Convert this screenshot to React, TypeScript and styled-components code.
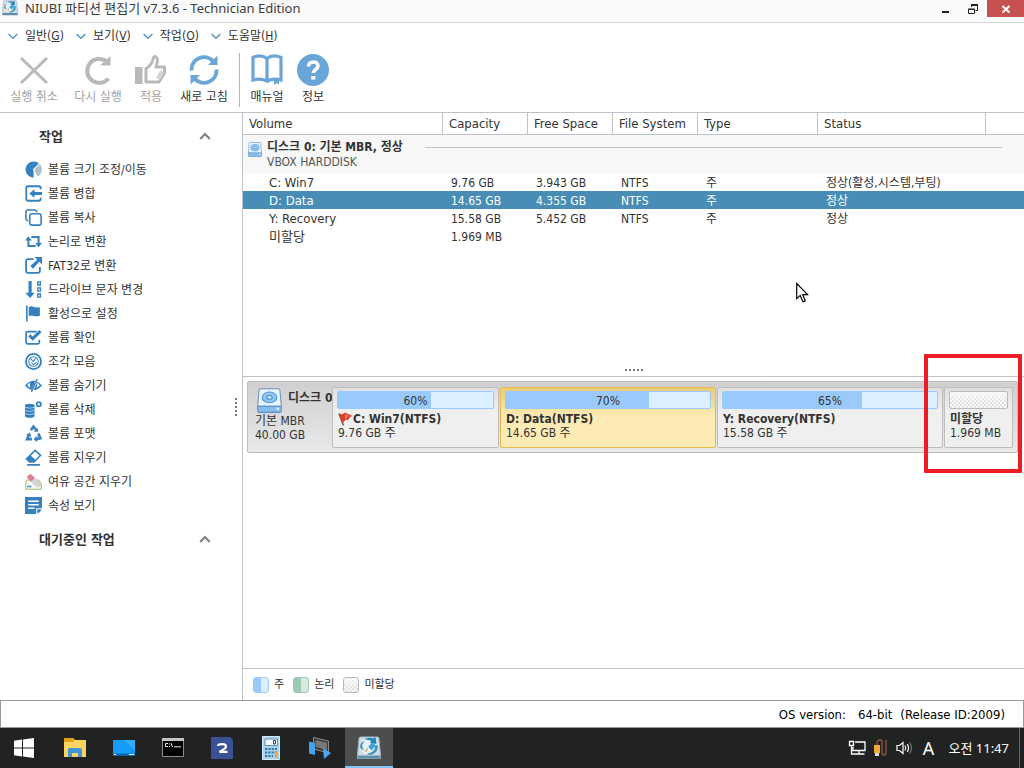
import React from "react";
import styled, { createGlobalStyle, css } from "styled-components";

const GlobalStyle = createGlobalStyle`
  * { box-sizing: border-box; }
  body {
    margin: 0;
    background: #fff;
    color: #333;
    font: 12px/18px "DejaVu Sans Condensed", "Noto Sans", "Noto Sans CJK KR", sans-serif;
  }
  button { font: inherit; color: inherit; background: none; border: 0; padding: 0; }
  ul { list-style: none; margin: 0; padding: 0; }
  svg { display: block; flex: none; }
`;

const line = "#bfc3c9";
const blue = "#3580bf";
const sky = "#99cafb";

const Window = styled.div`
  min-height: 100vh;
  display: flex;
  flex-direction: column;
`;

/* ---------- title bar ---------- */

const TitleBar = styled.header`
  display: flex;
  align-items: flex-start;
  height: 23px;
  padding-left: 2px;
  background: #fafafa;
  border-bottom: 1px solid #d4d4d4;
`;

const Title = styled.h1`
  flex: 1;
  margin: 0 0 0 7px;
  font: 13px/16px "Noto Sans", "Noto Sans CJK KR", sans-serif;
  color: #3c3c3c;
`;

const WindowButton = styled.button<{ $close?: boolean }>`
  display: flex;
  align-items: center;
  justify-content: center;
  width: ${(p) => (p.$close ? "37px" : "28px")};
  height: 17px;
  background: ${(p) => (p.$close ? "#c75050" : "none")};
`;

/* ---------- menu and toolbar ---------- */

const MenuBar = styled.nav`
  display: flex;
  gap: 12px;
  height: 25px;
  padding-left: 8px;
`;

const MenuButton = styled.button`
  display: flex;
  align-items: center;
  gap: 7px;
`;

const Toolbar = styled.div`
  display: flex;
  height: 65px;
  padding: 5px 2px;
  border-bottom: 1px solid ${line};
`;

const ToolButton = styled.button<{ $width: number }>`
  display: flex;
  flex-direction: column;
  align-items: center;
  gap: 3px;
  width: ${(p) => p.$width}px;
  padding-top: 1px;
  white-space: nowrap;
  line-height: 16px;
  color: #333;
  &:disabled { color: #a2a2a2; }
`;

const ToolDivider = styled.span`
  width: 1px;
  height: 54px;
  margin: 0 4px 0 3px;
  background: #b5b5b5;
`;

/* ---------- body ---------- */

const Body = styled.div`
  flex: 1;
  display: flex;
`;

const Sidebar = styled.aside`
  display: flex;
  width: 243px;
  border-right: 1px solid ${line};
`;

const SidebarContent = styled.div`
  flex: 1;
  padding: 11px 0 0 25px;
`;

const SectionHeader = styled.button`
  display: flex;
  align-items: center;
  justify-content: space-between;
  width: 100%;
  height: 24px;
  padding: 0 18px 0 14px;
  font-size: 13px;
  font-weight: bold;
`;

const TaskList = styled.ul`
  padding: 9px 0 10px;
`;

const TaskButton = styled.button`
  display: flex;
  align-items: center;
  gap: 6px;
  height: 24px;
  white-space: nowrap;
`;

const ButtonText = styled.span`
  padding-top: 2px;
`;

const Grip = styled.div<{ $vertical?: boolean }>`
  display: flex;
  align-items: center;
  justify-content: center;
  gap: 2px;
  ${(p) =>
    p.$vertical
      ? css`flex-direction: column; width: 13px;`
      : css`height: 14px; border-bottom: 1px solid ${line};`}
`;

const Dot = styled.i`
  width: 2px;
  height: 2px;
  background: #777;
`;

const Content = styled.main`
  flex: 1;
  min-width: 0;
  display: flex;
  flex-direction: column;
`;

const VolumePane = styled.section`
  position: relative;
  flex: 264 1 0;
  display: flex;
  flex-direction: column;
  justify-content: space-between;
`;

const VolumeTable = styled.table`
  width: 100%;
  table-layout: fixed;
  border-collapse: separate;
  border-spacing: 0;
  text-align: left;
`;

const HeadCell = styled.th`
  height: 22px;
  padding: 1px 6px 0;
  border-right: 1px solid ${line};
  border-bottom: 1px solid ${line};
  font-size: 13px;
  font-weight: normal;
  &:last-child { border-right: 0; }
`;

const GroupCell = styled.td`
  height: 38px;
  padding: 5px 22px 0 5px;
  background: #f7f7f7;
  vertical-align: top;
`;

const GroupLayout = styled.div`
  display: grid;
  grid-template-columns: 14px auto 1fr;
  column-gap: 5px;
  align-items: start;
  line-height: 15px;
`;

const GroupIcon = styled.span`
  padding-top: 2px;
`;

const GroupName = styled.strong`
  display: block;
`;

const GroupModel = styled.span`
  display: block;
  color: #555;
`;

const GroupRule = styled.span`
  height: 1px;
  margin: 7px 0 0 17px;
  background: #c4c4c4;
`;

const VolumeRow = styled.tr<{ $selected?: boolean }>`
  height: 18px;
  ${(p) => p.$selected && css`background: #478db5; color: #fff;`}
`;

const Cell = styled.td`
  padding: 2px 8px 0;
  line-height: 16px;
  white-space: nowrap;
  &:first-child {
    padding-left: 26px;
    font-size: 13px;
  }
`;

const Pointer = styled.svg`
  position: absolute;
  left: 553px;
  top: 169px;
`;

/* ---------- disk map ---------- */

const MapPane = styled.section`
  display: flow-root;
  flex: 291 1 0;
`;

const Disk = styled.div`
  display: grid;
  grid-template-columns: 83px 167fr 216fr 226fr 69px;
  column-gap: 1px;
  height: 72px;
  margin: 4px 6px 4px 4px;
  padding: 5px 4px 4px 0;
  border: 1px solid #bcbcbc;
  border-radius: 2px;
  background: linear-gradient(#cfcfcf, #e9e9e9);
`;

const DiskInfo = styled.div`
  padding: 1px 0 0 7px;
  line-height: 14px;
  white-space: nowrap;
`;

const DiskHead = styled.div`
  display: flex;
  gap: 6px;
  margin: 0 0 1px 2px;
  line-height: 20px;
  font-weight: bold;
`;

const Partition = styled.div<{ $selected?: boolean }>`
  position: relative;
  min-width: 0;
  padding: 3px 4px;
  border: 1px solid #bebebe;
  border-radius: 2px;
  background: linear-gradient(#dedede, #efefef 40%);
  line-height: 14px;
  white-space: nowrap;
  ${(p) =>
    p.$selected &&
    css`
      border-color: #e9b852;
      background: linear-gradient(#e8cd76, #fdebb5 50%);
    `}
`;

const UsageBar = styled.div`
  position: relative;
  height: 18px;
  margin-bottom: 2px;
  border: 1px solid ${sky};
  border-radius: 2px;
  background: #dceffe;
  text-align: center;
  line-height: 18px;
`;

const UsageFill = styled.div`
  position: absolute;
  inset: 0 auto 0 0;
  background: ${sky};
`;

const UsageText = styled.span`
  position: relative;
`;

const checker = css`
  background:
    linear-gradient(#f8f8f8, #f8f8f800 60%) 0 0 / 100% 100%,
    repeating-conic-gradient(#e2e2e2 0 25%, #fbfbfb 0 50%) 0 0 / 4px 4px;
`;

const FreeBar = styled.div`
  height: 18px;
  margin-bottom: 2px;
  border: 1px solid #bbb;
  border-radius: 2px;
  ${checker}
`;

const PartitionName = styled.strong`
  display: flex;
  align-items: center;
  height: 15px;
  padding-left: 1px;
`;

const PartitionSize = styled.span`
  display: block;
  padding-left: 1px;
`;

const Highlight = styled.div`
  position: absolute;
  inset: -34px -10px -26px -21px;
  border: 4px solid #ed1c24;
  border-radius: 1px;
`;

const Legend = styled.footer`
  display: flex;
  align-items: center;
  gap: 9px;
  height: 32px;
  padding-left: 10px;
  border-top: 1px solid ${line};
`;

const LegendItem = styled.span`
  display: flex;
  align-items: center;
  gap: 5px;
  font-size: 11px;
`;

const Swatch = styled.i<{ $kind: "primary" | "logical" | "free" }>`
  width: 16px;
  height: 16px;
  border: 1px solid;
  border-radius: 3px;
  ${(p) =>
    p.$kind === "primary"
      ? css`border-color: ${sky}; background: linear-gradient(90deg, ${sky} 50%, #dceffe 50%);`
      : p.$kind === "logical"
        ? css`border-color: #9ec8b2; background: linear-gradient(90deg, #9ec8b2 50%, #d9e9e0 50%);`
        : css`${checker} border-color: #b8b8b8;`}
`;

/* ---------- status bar and taskbar ---------- */

const StatusBar = styled.div`
  display: flex;
  align-items: center;
  justify-content: flex-end;
  height: 28px;
  padding: 2px 18px 0 0;
  border: 1px solid #999;
  font-size: 13px;
  color: #000;
`;

const StatusLabel = styled.span`
  margin-right: 12px;
`;

const StatusNote = styled.span`
  margin-left: 8px;
`;

const Taskbar = styled.footer`
  display: flex;
  height: 40px;
  background: #212322;
  color: #fff;
`;

const TaskbarApps = styled.div`
  display: flex;
  flex: 1;
  gap: 1px;
`;

const AppButton = styled.button<{ $active?: boolean; $start?: boolean }>`
  display: flex;
  align-items: center;
  justify-content: center;
  width: 48px;
  border-bottom: 2px solid transparent;
  padding-top: 2px;
  ${(p) => p.$start && css`margin-right: 2px;`}
  ${(p) => p.$active && css`background: #4b4e4d; border-bottom-color: #86c2f2;`}
`;

const Tray = styled.div`
  display: flex;
  align-items: center;
  gap: 6px;
  padding-right: 10px;
  border-right: 1px solid #666;
  margin-right: 4px;
`;

const InputMode = styled.button`
  width: 18px;
  font: 18px/20px "Noto Sans", sans-serif;
`;

const Clock = styled.time`
  margin-left: 5px;
  font: 13px/18px "Noto Sans", "Noto Sans CJK KR", sans-serif;
`;

/* ---------- drawings ---------- */

const Chevron = ({ up }: { up?: boolean }) => (
  <svg width={up ? 12 : 10} height={up ? 12 : 10} viewBox="0 0 10 10" fill="none" stroke={up ? "#808080" : "#5b93c4"} strokeWidth={up ? 1.8 : 1.5}>
    <path d={up ? "M1 7.5 5 3.3 9 7.5" : "M.6 3 5 7.2 9.4 3"} />
  </svg>
);

const DiskIcon = ({ width, height }: { width: number; height: number }) => (
  <svg width={width} height={height} viewBox="0 0 24 24" preserveAspectRatio="none">
    <path d="M3.5.8h17q1.3 0 1.5 1.3l1.4 15.4H.6L2 2.100Q2.200.8 3.500.8z" fill="#e8f4ff" stroke="#6c93b9" />
    <ellipse cx="12" cy="9" rx="7" ry="5.200" fill="#91c6f7" stroke="#4a92d6" />
    <ellipse cx="12" cy="9" rx="2.600" ry="1.800" fill="#d7ecff" stroke="#3f88cf" />
    <path d="M.7 17.500h22.600v4.500q0 1.400-1.400 1.400H2.100q-1.400 0-1.400-1.400z" fill="#86bdf0" stroke="#5e8fbd" />
    <circle cx="20" cy="20" r="1.200" fill="#fff" />
  </svg>
);

const AppLogo = ({ size }: { size: number }) => (
  <svg width={size} height={size} viewBox="0 0 24 24">
    <path d="M3.500 1h17q1.200 0 1.400 1.200L23.500 19v3.500H.5V19L2.100 2.200Q2.300 1 3.500 1z" fill="#cfdce3" stroke="#9fb4bf" />
    <path d="M.8 19.500h22.400v3H.8z" fill="#5f8fa8" />
    <circle cx="12" cy="10.500" r="9" fill="#e6eef2" />
    <path d="M7 3.500Q12 .5 16 2.500L18.500 1l1 7-6.500-1 1.500-2Q11 3 7 3.500z" fill="#1f86b8" />
    <path d="M3 11q0-4 4-6 0 2-2 4 0 3 2 5-3 0-4-3zM20.500 9q1.500 7-5.500 9.500-3 1-5.500-.5Q18 17 18.500 9z" fill="#3f93b8" />
    <path d="m11 11 4-4.500 4 3-4.500 5z" fill="#3fa4dc" />
    <path d="m11 11 3.500 3.500-4 .5z" fill="#f4f8fa" />
    <path d="m7.500 16 3.500-5-1 4z" fill="#c79b4a" />
  </svg>
);

const gray = "#b9b9b9";
const toolBlue = "#6aa5d8";

const toolIcons: Record<string, React.ReactNode> = {
  cancel: <path d="M3 4 29 29M29 4 3 29" stroke={gray} strokeWidth="3" />,
  redo: (
    <>
      <path d="M26.500 24.500A12 12 0 1 1 24 7" stroke={gray} strokeWidth="4" />
      <path d="M28.500 2v9.500H18z" fill={gray} />
    </>
  ),
  apply: (
    <>
      <path d="M0 13h7.500v17H0z" fill={gray} />
      <path d="M11 14.500c4-2 6.500-6 7.500-11 1.500-2 4-.5 4 3 0 2-1 4.500-1.500 6.500h8.500v6L24 28H11z" stroke={gray} strokeWidth="3" strokeLinejoin="round" />
      <path d="m23 25 4-8" stroke="#d5d5d5" strokeWidth="4" />
    </>
  ),
  refresh: (
    <>
      <path d="M3.500 16.500A12.500 12.500 0 0 1 25 7M28.500 15.500A12.500 12.500 0 0 1 7 25" stroke={toolBlue} strokeWidth="4" />
      <path d="M29.500 1.500V11H20zM2.500 30.500V21H12z" fill={toolBlue} />
    </>
  ),
  manual: (
    <>
      <path d="M16 4.500C12 1.500 7 1.300 2 3.500V26c5-1.500 10-1 14 1V4.500C20 1.500 25 1.300 30 3.500V26c-5-1.500-10-1-14 1" stroke={toolBlue} strokeWidth="3.200" />
      <path d="M23 24h5v7l-2.500-2-2.500 2z" fill={toolBlue} />
    </>
  ),
  info: (
    <>
      <circle cx="16" cy="16" r="16" fill={toolBlue} />
      <path d="M11.500 12.500c0-6 9.500-6 9.500-.5 0 3.500-4.700 3.500-4.700 7" stroke="#fff" strokeWidth="3.600" />
      <path d="M14.300 22h4v3.600h-4z" fill="#fff" />
    </>
  ),
};

const taskIcons: Record<string, React.ReactNode> = {
  resize: (
    <>
      <path d="M8 8 8.500.5a7.500 7.500 0 1 0-1 15z" fill={blue} />
      <path d="m8 8 5.500-5.500A7.500 7.500 0 0 1 11 15z" fill="#aebfd0" />
      <path d="M8.500.5a7.500 7.500 0 0 1 5 2L8 8v7.500L6 15z" fill={blue} />
      <path d="M13.500 2.500 8 8l3.500 7" stroke="#fff" />
    </>
  ),
  merge: (
    <>
      <path d="M14.800 4V3Q14.800 1.200 13 1.200H3Q1.200 1.200 1.200 3v10q0 1.800 1.800 1.800h10q1.800 0 1.800-1.800v-1" stroke={blue} strokeWidth="1.700" />
      <path d="m4 8 5-4v2.500h7v3H9V12z" fill={blue} />
    </>
  ),
  copy: (
    <>
      <rect x="4.500" y="4.500" width="10.700" height="10.700" rx="2" stroke={blue} strokeWidth="1.500" />
      <path d="M2.800 11.500.9 9.600V3Q.9.900 3 .9h6.500l2 1.800" stroke={blue} strokeWidth="1.500" />
    </>
  ),
  logical: (
    <>
      <path d="M10 12.200H3.200V6M6 3.800h6.800V10" stroke={blue} strokeWidth="1.900" />
      <path d="m0 7 3.200-4 3.200 4zm9.600 2.500h6.400l-3.200 4z" fill={blue} />
    </>
  ),
  fat: (
    <>
      <path d="M8 2H3Q1 2 1 4v9q0 2 2 2h9q2 0 2-2V9.500" stroke={blue} strokeWidth="1.700" />
      <path d="M9 0h7v7l-2.500-2.500-6 6.500L5 8.500l6.500-6z" fill={blue} />
    </>
  ),
  letter: (
    <>
      <path d="M3.300 0h3v11h3L4.800 16 .3 11h3z" fill={blue} />
      <path d="M12 .8h2.500v3H12zM12 6.500h2.500v3H12zM12 12.200h2.500v3H12z" stroke={blue} strokeWidth="1.300" />
    </>
  ),
  active: <path d="M1 .5h1.500v15H1zM3.500 2c4-2.500 5 1.500 10.500 0v8c-5 2-6.500-1.500-10.500.5z" fill={blue} />,
  check: (
    <>
      <path d="M11 2.500H2.500Q1 2.500 1 4v8.500Q1 14 2.500 14H12q1.500 0 1.500-1.500V10" stroke={blue} strokeWidth="1.600" />
      <path d="m4 6 3.300 3L14.500 2" stroke={blue} strokeWidth="3" />
    </>
  ),
  defrag: (
    <>
      <circle cx="8" cy="8" r="7.100" stroke={blue} strokeWidth="1.700" />
      <circle cx="8" cy="8" r="4.500" stroke={blue} />
      <path d="m5 5 3 3 2-3M6 9l2 2 3-2" stroke={blue} />
    </>
  ),
  hide: (
    <>
      <path d="M0 8q8-9 16 0-8 9-16 0z" fill={blue} />
      <path d="M2 8q1.500-2 3-2.500-1 3 .5 4.500Q4 10 2 8zm12 0q-1.500-2-3-2.500 1 3-.5 4.500Q12 10 14 8z" fill="#fff" />
      <path d="m6.500 14 5-12" stroke="#fff" strokeWidth="2" />
      <path d="m6 14 5.500-12" stroke={blue} strokeWidth="1.300" />
    </>
  ),
  remove: (
    <>
      <path d="M0 4q0-1.500 4.500-1.500T9 4v10q0 1.700-4.500 1.700T0 14z" fill={blue} />
      <path d="M0 6q4.500 1.500 9 0M0 9q4.500 1.500 9 0M0 12q4.500 1.500 9 0" stroke="#b9d6ee" strokeWidth=".8" />
      <circle cx="13" cy="3" r="2" stroke={blue} strokeWidth="1.700" />
    </>
  ),
  format: (
    <>
      <path d="M5.500 5 8 1.500 10.500 5M12.500 8l2 4.500-4 .8M6.500 13.300H2L3.800 9" stroke={blue} strokeWidth="2.500" />
      <path d="m8.500 6.500 4-.5-.5-3.500zM11.500 10v6L8 13.300zM1 9.500l3.500-2.500 1.500 4z" fill={blue} />
    </>
  ),
  erase: (
    <>
      <path d="M9.500 1.300 14.700 6 8.500 12.200H4.200L1.300 9.500z" stroke={blue} strokeWidth="1.400" />
      <path d="m5 5.700 5.500 5.100-2 1.400H4.200L1.300 9.500zM2 14h12v1.700H2z" fill={blue} />
    </>
  ),
  wipe: (
    <>
      <path d="M1.500 6.500h11L15.300 10v5.300H.7V9z" fill="#f2f8ea" stroke="#9dc47d" />
      <path d="M2 12h4v1.500H2z" fill="#4a92d6" />
      <path d="M1.500 3.500 5 .7l4.500 4-4 3.800z" fill="#de7f96" />
      <path d="m9.500 4.700 5.500 6q0 2.500-3 3l-6.500-5.200z" fill="#d4d4d4" />
    </>
  ),
  props: (
    <>
      <path d="M0 0h16v11l-5 5H0z" fill={blue} />
      <path d="M3 4h10M3 7.300h10M3 10.600h6" stroke="#fff" strokeWidth="1.300" />
      <path d="M11 16v-5h5" stroke="#fff" />
      <path d="M12.500 15.500v-3h3z" fill={blue} />
    </>
  ),
};

const Icon = ({ size, children }: { size: number; children: React.ReactNode }) => (
  <svg width={size} height={size} viewBox={size > 20 ? "0 0 32 32" : "0 0 16 16"} fill="none" aria-hidden="true">
    {children}
  </svg>
);

const FlagIcon = () => (
  <svg width="15" height="14" viewBox="0 0 15 14">
    <path d="M1 1.500 5.500 13.500" stroke="#7c5a4d" strokeWidth="1.500" />
    <path d="M1 1.500q4 2 6-1l7.500 3.500-2.500 1-2 3-2-.5-4 4z" fill="#d93a2b" />
    <path d="m7 1.500 4 2-4 4z" fill="#f4765c" />
  </svg>
);

/* taskbar program icons, in display order */
const apps: { name: string; art: React.ReactNode }[] = [
  {
    name: "File Explorer",
    art: (
      <>
        <path d="M1 2h9l2 2h11v17H1z" fill="#fcd462" />
        <path d="M1 2h9l2 2-2 2H1z" fill="#e3a21a" />
        <path d="M5 21v-7q0-2 2-2h10q2 0 2 2v7h-4v-4H9v4z" fill="#3f95dc" />
      </>
    ),
  },
  {
    name: "Desktop",
    art: (
      <>
        <path d="M1 4h22v16H1z" fill="#149cfb" />
        <path d="M12 4h11v10z" fill="#36acff" />
        <path d="M1 17.500h22V20H1z" fill="#0b64a8" />
        <path d="M2 18.500h2M17 18.500h5" stroke="#fff" />
      </>
    ),
  },
  {
    name: "Command Prompt",
    art: (
      <>
        <path d="M1.500 2.500h21v18h-21z" fill="#000" stroke="#8c8c8c" />
        <path d="M1 2h22v3H1z" fill="#c4c4c4" />
        <path d="M7 7.500H4.500v3H7M8.500 7.500v1M8.500 10v1M10 7l1.500 4M13 10.800h7" stroke="#eee" fill="none" />
      </>
    ),
  },
  {
    name: "2",
    art: (
      <>
        <path d="M1 1h19l3 3v19H1z" fill="#3a5196" />
        <path d="M8 10Q8 8.200 12 8.200t4 2.300Q16 12.500 9.500 15.800H17.500" stroke="#fff" strokeWidth="2.200" fill="none" />
      </>
    ),
  },
  {
    name: "Calculator",
    art: (
      <>
        <path d="M3.500.5h17v23h-17z" fill="#a9d2ef" stroke="#d5eafa" />
        <path d="M6 3h12.500v6.500H6z" fill="#f4faff" stroke="#5c93be" />
        <path d="M14.500 4.500h2v3.500h-2z" fill="none" stroke="#345" />
        <path d="M6 13h12M6 16.500h12M6 20h8" stroke="#3c78a8" strokeWidth="2.200" strokeDasharray="2.200 1.100" />
        <path d="M16 15.500h2.500v6H16z" fill="#f0a030" />
      </>
    ),
  },
  {
    name: "Virtual Machine",
    art: (
      <>
        <path d="m5.500 1.500 15 3.500v12l-15-4z" fill="#3a3a3a" stroke="#8a8a8a" />
        <path d="m7.500 4 11.500 2.700v7L7.500 11z" fill="#777" />
        <path d="m1 5.500 6 1.500v12l-6-1.500z" fill="#3ea4ee" />
        <path d="m15 12 8 5-7 6z" fill="#4aa8ef" />
      </>
    ),
  },
];

/* ---------- data ---------- */

const menus = [
  ["일반", "G"],
  ["보기", "V"],
  ["작업", "O"],
  ["도움말", "H"],
];

const tools = [
  { icon: "cancel", label: "실행 취소", width: 64, disabled: true },
  { icon: "redo", label: "다시 실행", width: 64, disabled: true },
  { icon: "apply", label: "적용", width: 42, disabled: true },
  { icon: "refresh", label: "새로 고침", width: 64 },
];

const helpTools = [
  { icon: "manual", label: "매뉴얼", width: 46 },
  { icon: "info", label: "정보", width: 46 },
];

const tasks = [
  ["resize", "볼륨 크기 조정/이동"],
  ["merge", "볼륨 병합"],
  ["copy", "볼륨 복사"],
  ["logical", "논리로 변환"],
  ["fat", "FAT32로 변환"],
  ["letter", "드라이브 문자 변경"],
  ["active", "활성으로 설정"],
  ["check", "볼륨 확인"],
  ["defrag", "조각 모음"],
  ["hide", "볼륨 숨기기"],
  ["remove", "볼륨 삭제"],
  ["format", "볼륨 포맷"],
  ["erase", "볼륨 지우기"],
  ["wipe", "여유 공간 지우기"],
  ["props", "속성 보기"],
];

const columns = [
  ["Volume", 200],
  ["Capacity", 85],
  ["Free Space", 85],
  ["File System", 85],
  ["Type", 120],
  ["Status", 168],
] as const;

const volumes = [
  ["C: Win7", "9.76 GB", "3.943 GB", "NTFS", "주", "정상(활성,시스템,부팅)"],
  ["D: Data", "14.65 GB", "4.355 GB", "NTFS", "주", "정상"],
  ["Y: Recovery", "15.58 GB", "5.452 GB", "NTFS", "주", "정상"],
  ["미할당", "1.969 MB", "", "", "", ""],
];

const partitions = [
  { name: "C: Win7(NTFS)", size: "9.76 GB 주", used: 60, flag: true },
  { name: "D: Data(NTFS)", size: "14.65 GB 주", used: 70, selected: true },
  { name: "Y: Recovery(NTFS)", size: "15.58 GB 주", used: 65 },
];

const Dots = ({ vertical }: { vertical?: boolean }) => (
  <Grip $vertical={vertical}>
    {[0, 1, 2, 3, 4].map((n) => (
      <Dot key={n} />
    ))}
  </Grip>
);

const ToolItem = ({ icon, label, width, disabled }: { icon: string; label: string; width: number; disabled?: boolean }) => (
  <ToolButton $width={width} disabled={disabled}>
    <Icon size={32}>{toolIcons[icon]}</Icon>
    {label}
  </ToolButton>
);

export default function App() {
  return (
    <Window>
      <GlobalStyle />
      <TitleBar>
        <AppLogo size={16} />
        <Title>NIUBI 파티션 편집기 v7.3.6 - Technician Edition</Title>
        <WindowButton aria-label="Minimize">
          <svg width="12" height="12"><path d="M3 8h7v2H3z" fill="#222" /></svg>
        </WindowButton>
        <WindowButton aria-label="Restore">
          <svg width="12" height="12" fill="none" stroke="#222">
            <path d="M4.500 4V2.500h6v5H8.500" />
            <path d="M4 2h7" strokeWidth="2" />
            <path d="M1.500 6.500h6v4h-6zM1 6h7" />
          </svg>
        </WindowButton>
        <WindowButton $close aria-label="Close">
          <svg width="10" height="10" stroke="#fff" strokeWidth="2"><path d="m1.500 2 7 6.500m0-6.500-7 6.500" /></svg>
        </WindowButton>
      </TitleBar>

      <MenuBar>
        {menus.map(([label, key]) => (
          <MenuButton key={key}>
            <Chevron />
            <span>{label}(<u>{key}</u>)</span>
          </MenuButton>
        ))}
      </MenuBar>

      <Toolbar>
        {tools.map((t) => <ToolItem key={t.icon} {...t} />)}
        <ToolDivider />
        {helpTools.map((t) => <ToolItem key={t.icon} {...t} />)}
      </Toolbar>

      <Body>
        <Sidebar>
          <SidebarContent>
            <SectionHeader><ButtonText>작업</ButtonText><Chevron up /></SectionHeader>
            <TaskList>
              {tasks.map(([icon, label]) => (
                <li key={icon}>
                  <TaskButton>
                    <Icon size={17}>{taskIcons[icon]}</Icon>
                    <ButtonText>{label}</ButtonText>
                  </TaskButton>
                </li>
              ))}
            </TaskList>
            <SectionHeader><ButtonText>대기중인 작업</ButtonText><Chevron up /></SectionHeader>
          </SidebarContent>
          <Dots vertical />
        </Sidebar>

        <Content>
          <VolumePane>
            <VolumeTable>
              <colgroup>
                {columns.map(([name, width]) => <col key={name} width={width} />)}
                <col />
              </colgroup>
              <thead>
                <tr>
                  {columns.map(([name]) => <HeadCell key={name}>{name}</HeadCell>)}
                  <HeadCell />
                </tr>
              </thead>
              <tbody>
                <tr>
                  <GroupCell colSpan={7}>
                    <GroupLayout>
                      <GroupIcon><DiskIcon width={14} height={15} /></GroupIcon>
                      <div>
                        <GroupName>디스크 0: 기본 MBR, 정상</GroupName>
                        <GroupModel>VBOX HARDDISK</GroupModel>
                      </div>
                      <GroupRule />
                    </GroupLayout>
                  </GroupCell>
                </tr>
                {volumes.map((row, r) => (
                  <VolumeRow key={row[0]} $selected={r === 1}>
                    {row.map((value, c) => <Cell key={c}>{value}</Cell>)}
                    <Cell />
                  </VolumeRow>
                ))}
              </tbody>
            </VolumeTable>
            <Pointer width="13" height="21" viewBox="0 0 13 21">
              <path d="M.7 1.500v15.200l3.500-3.300 2.600 6q1.300.8 2.400-1L6.700 12.700h5z" fill="#fff" stroke="#000" strokeWidth="1.200" />
            </Pointer>
            <Dots />
          </VolumePane>

          <MapPane>
            <Disk>
              <DiskInfo>
                <DiskHead>
                  <DiskIcon width={25} height={25} />
                  디스크 0
                </DiskHead>
                기본 MBR<br />40.00 GB
              </DiskInfo>
              {partitions.map((p) => (
                <Partition key={p.name} $selected={p.selected}>
                  <UsageBar>
                    <UsageFill style={{ width: `${p.used}%` }} />
                    <UsageText>{p.used}%</UsageText>
                  </UsageBar>
                  <PartitionName>{p.flag && <FlagIcon />}{p.name}</PartitionName>
                  <PartitionSize>{p.size}</PartitionSize>
                </Partition>
              ))}
              <Partition>
                <FreeBar />
                <PartitionName>미할당</PartitionName>
                <PartitionSize>1.969 MB</PartitionSize>
                <Highlight />
              </Partition>
            </Disk>
          </MapPane>

          <Legend>
            <LegendItem><Swatch $kind="primary" />주</LegendItem>
            <LegendItem><Swatch $kind="logical" />논리</LegendItem>
            <LegendItem><Swatch $kind="free" />미할당</LegendItem>
          </Legend>
        </Content>
      </Body>

      <StatusBar>
        <StatusLabel>OS version:</StatusLabel>
        <span>64-bit</span>
        <StatusNote>(Release ID:2009)</StatusNote>
      </StatusBar>

      <Taskbar>
        <TaskbarApps>
          <AppButton $start aria-label="Start">
            <svg width="20" height="20" fill="#fff"><path d="M0 2.700 8 1.600v7.900H0zM9 1.400 20 0v9.500H9zM0 10.500h8v7.900l-8-1.100zM9 10.500h11V20L9 18.600z" /></svg>
          </AppButton>
          {apps.map((a) => (
            <AppButton key={a.name} aria-label={a.name}>
              <svg width="24" height="24">{a.art}</svg>
            </AppButton>
          ))}
          <AppButton $active aria-label="NIUBI">
            <AppLogo size={24} />
          </AppButton>
        </TaskbarApps>
        <Tray>
          <svg width="18" height="16" fill="none" stroke="#fff" strokeWidth="1.300">
            <path d="M7 2h10v8.500H5V7M1.500 1.500h4v4h-4zM3.500 5.500v8.500h13M11 10.500V14" />
          </svg>
          <svg width="18" height="18" fill="none">
            <path d="M5 6V4q0-3 3-3t2 4v8q0 3 2 3t2-3V1" stroke="#9c5340" strokeWidth="1.300" />
            <path d="M2 6h6v8H2z" fill="#f2a93b" />
            <path d="M3 14h4v3H3z" fill="#ddd" />
          </svg>
          <svg width="17" height="16" fill="none" stroke="#fff" strokeWidth="1.200">
            <path d="M1 5.500h2.500L7 2.500v11l-3.500-3H1zM9 5.500q1.500 2.500 0 5M11.300 4q2.500 4 0 8" />
            <path d="M13.500 2.500q4 5.500 0 11" stroke="#777" />
          </svg>
          <InputMode>A</InputMode>
          <Clock>오전 11:47</Clock>
        </Tray>
      </Taskbar>
    </Window>
  );
}
